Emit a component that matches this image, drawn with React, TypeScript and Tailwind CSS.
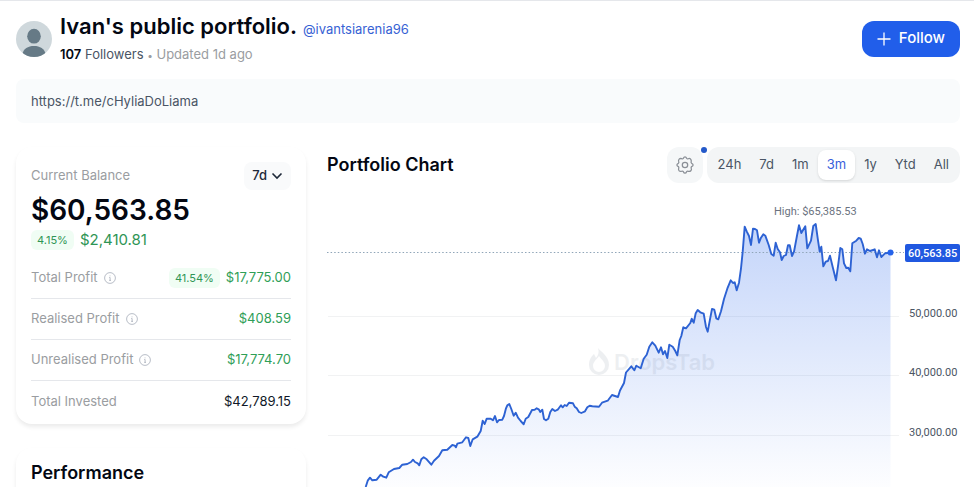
import React, { useState } from 'react';

// --- Types ---
interface Stat {
  label: string;
  value: string;
  percent?: string;
  hint?: boolean;
  positive?: boolean;
}

// --- Data ---
const RANGES = ['24h', '7d', '1m', '3m', '1y', 'Ytd', 'All'];

const STATS: Stat[] = [
  { label: 'Total Profit', value: '$17,775.00', percent: '41.54%', hint: true, positive: true },
  { label: 'Realised Profit', value: '$408.59', hint: true, positive: true },
  { label: 'Unrealised Profit', value: '$17,774.70', hint: true, positive: true },
  { label: 'Total Invested', value: '$42,789.15' },
];

const GRID = [
  { label: '50,000.00', y: 117 },
  { label: '40,000.00', y: 176 },
  { label: '30,000.00', y: 236 },
];

const LINE = [
  '38.7,287 40.7,280.7 43,277.7 45.3,280.3 49.7,279.7 53.7,274.7 56.3,276.7 59.3,277.7 61.7,272.3 67,269',
  '72.3,268 75.3,264.7 80.3,264 84,262 86,259.7 88,262 90.7,263.3 92.3,265.3 94.3,259.3 96.7,257.3',
  '99.7,259.3 104.3,264.7 107,260.7 112,256 115.3,250.3 120.3,249.7 125.3,245 127.7,245.7 129,247.3 130.3,243.7',
  '135.3,242.3 139,237.3 141.3,238 143.3,246 145.7,239.3 150.3,236.7 153.7,231 155.7,220.7 157.7,224 159.7,218.7',
  '163.7,218.7 166,220.3 168,216 170,222.3 172,220 175.3,219.7 177,216 179,208.3 180.3,205.3 182.3,204',
  '184.3,209 186.7,215.7 188.7,212.7 191,217.7 193.7,221 196.7,224.3 198.7,218.7 201.3,217 205,210 207.7,209.7',
  '209.7,208.3 211.7,209.3 213.3,212 215.3,209.7 217,219 219,220.3 221.3,218.7 223.3,212 225.3,209 228,211',
  '230.7,209.7 234,205.3 235.7,207.3 237.7,205 239.7,206 242,202.7 246,203.3 247.7,206.7 249.7,208.3 252,212',
  '254.3,213 258,211.3 260.3,207.3 262.7,205.7 265.3,206.3 272,206.7 275,202.7 280.7,200.7 285,195 291,197',
  '293,190.5 297,183 299,172.5 304.3,166.3 307.3,170.3 309.3,165.7 313.7,168.3 316.7,158.7 319.7,154.7 322.3,146.7',
  '325.3,142.3 328.3,145.7 331.7,152.7 334,147.3 336,154.3 338,151 340.3,158 342.3,144.7 345.7,146.7 348.3,151',
  '350.3,155.3 352.7,140 354.3,136 356.3,127.3 359,128.3 363.3,123 364.7,118.7 366.7,122.7 368.7,113.3 370.7,110',
  '373.3,112.3 376.7,113.7 379,127 380.7,131.7 383,119.3 385,109 387.3,109.7 389.3,118.3 391.3,119.3 394,111.3',
  '397,99 400.3,88.7 403.7,80.3 406,83 407.7,82.3 409.7,90.3 412,82.7 414,68.3 415.7,51.7 417.7,26.7',
  '419.7,31.3 422,36 424,45 426,28.7 428,29 430,30.3 432,42.7 434,37.7 436.3,34.3 438.3,35.7',
  '441.7,45 444.3,54 446.7,55.7 448.7,42.7 450.7,49 453,52.3 454.7,60 456.7,56 459,55 461,45.3',
  '462.7,45.3 465,56 467,51.7 469.7,37.3 472,25.3 474.3,33 478.3,26.3 480.3,48.3 484,40.7 486.3,26',
  '488.7,24 490.7,38.3 492.7,51.7 494.3,46.7 496.3,66.3 498.7,61.7 501,61 503,55.7 505.7,67 509,80.3',
  '511.3,64 513.3,48 515.3,49.3 517,63.3 519.3,68 521.3,67.7 523.3,71.3 525.3,43.3 529.3,40.7 531.7,38',
  '533.7,38.7 535.7,44 538,53.7 540,49.3 543,51 547.7,49.3 550,57.3 552,50.3 554.3,57 558,53.3 563.5,52.7',
].join(' ');

// --- Icons ---
const InfoIcon = () => (
  <svg viewBox="0 0 12 12" className="size-3 text-gray-400" fill="none" stroke="currentColor" strokeWidth="0.7" aria-hidden="true">
    <circle cx="6" cy="6" r="5.4" />
    <path d="M5.3 5.5H6.1V8.3M5.2 8.4H7M6 3.5V4.3" />
  </svg>
);

const GearIcon = () => (
  <svg viewBox="0 0 20 20" className="size-[18px]" fill="none" stroke="currentColor" strokeWidth="1.4" strokeLinejoin="round" aria-hidden="true">
    <path d="M8.2 2.6Q8.800 1 10 1T11.800 2.600Q12.500 3.500 13.600 3Q15.200 2.300 16.200 3.400T16.900 6.200Q16.400 7.400 17.400 8.200Q19 8.800 19 10T17.400 11.800Q16.400 12.500 16.900 13.700Q17.600 15.300 16.500 16.400T13.700 17Q12.500 16.500 11.800 17.400Q11.200 19 10 19T8.200 17.400Q7.500 16.400 6.300 16.900Q4.600 17.600 3.500 16.500T3 13.700Q3.500 12.500 2.600 11.800Q1 11.200 1 10T2.600 8.200Q3.500 7.400 3 6.200Q2.400 4.600 3.500 3.500T6.300 3Q7.500 3.500 8.200 2.600Z" />
    <circle cx="10" cy="10" r="3" />
  </svg>
);

const Avatar = () => (
  <svg viewBox="0 0 36 36" className="size-9 shrink-0 rounded-full bg-[#cfd8dc]" role="img" aria-label="Ivan">
    <ellipse cx="18" cy="15.2" rx="6.8" ry="7.4" fill="#667a86" />
    <path d="M6 34C7.500 27.500 12 25 18 25S28.500 27.500 30 34L26 36H10Z" fill="#667a86" />
  </svg>
);

// --- Balance card ---
const BalanceCard: React.FC = () => (
  <section className="rounded-2xl bg-white px-[15px] pt-[15px] pb-0.5 shadow-[0_3px_4px_rgba(0,0,0,0.08)]">
    <div className="flex items-center justify-between">
      <h2 className="text-[13px] text-[#9a9da1]">Current Balance</h2>
      <button className="flex h-7 items-center gap-1 rounded-lg bg-gray-50 px-2 text-[13px] font-medium text-gray-800">
        7d
        <svg viewBox="0 0 12 12" className="size-3" fill="none" stroke="currentColor" strokeWidth="1.6" aria-hidden="true">
          <path d="M1.500 3.500 6 8 10.500 3.500" />
        </svg>
      </button>
    </div>
    <div className="mt-1 text-[28px] leading-8 font-semibold text-gray-950">$60,563.85</div>
    <div className="mt-1 flex items-center gap-1.5 text-[#2f9555]">
      <span className="rounded-md bg-green-50 px-1.5 text-[11px] leading-5">4.15%</span>
      <span className="text-[15px] leading-5">$2,410.81</span>
    </div>
    <dl className="mt-2 divide-y divide-gray-200">
      {STATS.map((s) => (
        <div key={s.label} className="flex h-[41px] items-center justify-between text-[13px]">
          <dt className="flex items-center gap-1.5 text-[#9a9da1]">
            {s.label}
            {s.hint && <InfoIcon />}
          </dt>
          <dd className={`flex items-center gap-1.5 ${s.positive ? 'text-[#2f9e57]' : 'text-gray-900'}`}>
            {s.percent && <span className="rounded-md bg-green-50 px-1.5 text-[11px] leading-5 text-[#2f9555]">{s.percent}</span>}
            {s.value}
          </dd>
        </div>
      ))}
    </dl>
  </section>
);

// --- Chart ---
const PortfolioChart: React.FC = () => (
  <svg viewBox="0 0 633 287" className="block h-auto w-full font-[Roboto,sans-serif]" role="img" aria-label="Portfolio value over three months">
    <defs>
      <linearGradient id="area" x1="0" y1="24" x2="0" y2="287" gradientUnits="userSpaceOnUse">
        <stop offset="0" stopColor="#2563eb" stopOpacity="0.27" />
        <stop offset="1" stopColor="#2563eb" stopOpacity="0.01" />
      </linearGradient>
    </defs>

    {GRID.map((g) => (
      <g key={g.label}>
        <path d={`M1 ${g.y - 0.5}H572`} stroke="#f1f2f3" />
        <text x="582" y={g.y} fontSize="11" fill="#4b5563">{g.label}</text>
      </g>
    ))}

    <polygon points={`${LINE} 563.5,287`} fill="url(#area)" />

    {/* Watermark */}
    <g opacity="0.11" fill="#64748b">
      <path d="M271 148C273 151 282 156 282 165A10 10 0 0 1 262 165C262 159 265 156 267 154L269 158C272 155 272 151 271 148ZM272 156C269 160 266 162 266 166A6 6 0 0 0 278 166C278 162 275 160 272 156Z" fillRule="evenodd" />
      <text x="287" y="170" fontSize="22" fontWeight="600" className="font-[Inter,sans-serif]">DropsTab</text>
    </g>

    <path d="M0 52.5H577" stroke="#8fa5b8" strokeDasharray="1.5 2.1" />
    <polyline points={LINE} fill="none" stroke="#2d62d3" strokeWidth="1.9" strokeLinejoin="round" />
    <circle cx="563.5" cy="52.5" r="3" fill="#2563eb" />

    <text x="447" y="15" fontSize="11" fill="#6b7280">High: $65,385.53</text>
    <rect x="578" y="44" width="55" height="18" rx="2" fill="#2058e0" />
    <text x="581" y="57" fontSize="11" fontWeight="500" fill="#fff">60,563.85</text>
  </svg>
);

export default function App() {
  const [range, setRange] = useState('3m');

  return (
    <div className="h-screen overflow-hidden border-t border-gray-200 bg-white font-[Inter,sans-serif] text-gray-950">
      <header className="flex items-center justify-between pt-[11px] pr-3.5 pl-4">
        <div className="flex items-center gap-2">
          <Avatar />
          <div>
            <div className="flex items-baseline gap-1.5">
              <h1 className="text-[22px] leading-7 font-semibold">Ivan's public portfolio.</h1>
              <a href="#profile" className="text-[13px] text-[#3762d4]">@ivantsiarenia96</a>
            </div>
            <p className="mt-1 text-[13px] leading-5 text-[#9a9da1]">
              <b className="font-semibold text-gray-950">107</b> <span className="text-gray-600">Followers</span>{' '}
              <span className="text-[10px]">•</span> Updated 1d ago
            </p>
          </div>
        </div>
        <button className="flex h-9 items-center gap-2 rounded-xl bg-[#215eea] px-[15px] text-[15px] font-medium text-white">
          <svg viewBox="0 0 14 14" className="size-3.5" stroke="currentColor" strokeWidth="1.3" aria-hidden="true">
            <path d="M7 0.500V13.500M0.500 7H13.500" />
          </svg>
          Follow
        </button>
      </header>

      <p className="mt-3.5 mr-3.5 ml-4 rounded-lg bg-[#f9fbfc] px-[15px] py-3 text-[13px] leading-5 text-gray-600">https://t.me/cHyliaDoLiama</p>

      <main className="mt-6 flex gap-[21px] pr-3.5 pl-4">
        <div className="flex w-[290px] shrink-0 flex-col gap-6">
          <BalanceCard />
          <section className="h-40 rounded-2xl px-[15px] pt-[11px] shadow-[0_3px_4px_rgba(0,0,0,0.08)]">
            <h2 className="text-lg font-semibold">Performance</h2>
          </section>
        </div>

        <section className="min-w-0 flex-1">
          <div className="flex items-center justify-between">
            <h2 className="text-lg font-semibold">Portfolio Chart</h2>
            <div className="flex items-center gap-1">
              <button aria-label="Chart settings" className="relative flex size-9 items-center justify-center rounded-xl bg-[#f5f7f8] text-[#8b9097]">
                <GearIcon />
                <span className="absolute top-0 -right-1 size-1.5 rounded-full bg-[#2459c9]" />
              </button>
              <div className="flex h-9 items-center rounded-xl bg-[#f3f5f6] p-0.5">
                {RANGES.map((r) => (
                  <button
                    key={r}
                    onClick={() => setRange(r)}
                    className={`h-[30px] rounded-lg px-[9px] text-[13px] ${r === range ? 'bg-white text-[#3b5fdb] shadow-sm' : 'text-gray-600'}`}
                  >
                    {r}
                  </button>
                ))}
              </div>
            </div>
          </div>
          <div className="mt-[17px]">
            <PortfolioChart />
          </div>
        </section>
      </main>
    </div>
  );
}
